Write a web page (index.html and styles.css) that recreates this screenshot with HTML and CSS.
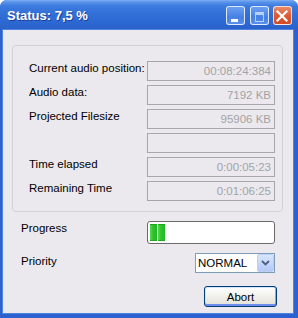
FILE: index.html
```html
<!DOCTYPE html>
<html lang="en">
<head>
  <meta charset="UTF-8" />
  <title>Status</title>
  <link rel="stylesheet" href="styles.css">
</head>
<body>
  <div class="window">
    <div class="titlebar">
      <span class="title">Status: 7,5 %</span>
      <div class="title-btns">
        <span class="tb tb-min"><i></i></span>
        <span class="tb tb-max"><i></i></span>
        <span class="tb tb-close">
          <svg width="19" height="19" viewBox="0 0 19 19"><path d="M4.5 5.5L13.5 14.5M13.5 5.5L4.5 14.5" stroke="#fff" stroke-width="2.2" stroke-linecap="square"/></svg>
        </span>
      </div>
    </div>
    <div class="client">
      <div class="group">
        <label>Current audio position:</label>
        <div class="field">00:08:24:384</div>
        <label>Audio data:</label>
        <div class="field">7192 KB</div>
        <label>Projected Filesize</label>
        <div class="field">95906 KB</div>
        <label></label>
        <div class="field"></div>
        <label>Time elapsed</label>
        <div class="field">0:00:05:23</div>
        <label>Remaining Time</label>
        <div class="field">0:01:06:25</div>
      </div>
      <div class="controls">
        <label class="lbl-progress">Progress</label>
        <div class="progress"><span class="chunk"></span><span class="chunk"></span></div>
        <label class="lbl-prio">Priority</label>
        <div class="select">
          <span class="select-text">NORMAL</span>
          <span class="arrow">
            <svg width="9" height="6" viewBox="0 0 9 6"><path d="M1 1L4.5 4.5L8 1" fill="none" stroke="#4d6185" stroke-width="1.8"/></svg>
          </span>
        </div>
        <button class="abort">Abort</button>
      </div>
    </div>
  </div>
</body>
</html>
```

FILE: styles.css
```css
body {
  margin: 0;
  background: #fff;
  font-family: "Liberation Sans", Arial, sans-serif;
  font-size: 11.5px;
  color: #000;
}

.window {
  width: 298px;
  height: 318px;
  display: flex;
  flex-direction: column;
  background: #2c61cf;
  border-radius: 7px 7px 0 0;
  overflow: hidden;
}

/* title bar */
.titlebar {
  height: 30px;
  flex: none;
  display: flex;
  align-items: center;
  justify-content: space-between;
  padding: 1px 6px 0 7px;
  box-sizing: border-box;
  background: linear-gradient(to bottom, #7eaef2 0, #5a93ea 2px, #3c7ade 6px, #3270d8 14px, #2d68d2 22px, #2a60c8 30px);
}
.title {
  font-weight: bold;
  font-size: 13px;
  color: #fff;
  text-shadow: 1px 1px 0 #1b3f9a;
}
.title-btns {
  display: flex;
  gap: 5px;
  margin-top: -1px;
}
.tb {
  width: 19px;
  height: 19px;
  border: 1px solid rgba(255, 255, 255, 0.8);
  border-radius: 3px;
  box-sizing: border-box;
  position: relative;
  background: linear-gradient(to bottom, #6a9ff0, #4680e3 60%, #5a8fe8);
}
.tb-close {
  margin-left: -1px;
  background: linear-gradient(to bottom, #ea8a6a, #df5a33 50%, #d24a24);
}
.tb-close svg { position: absolute; left: 0; top: 0; margin: -1px; }
.tb-min i {
  position: absolute;
  left: 4px;
  top: 12px;
  width: 7px;
  height: 3px;
  background: #fff;
}
.tb-max i {
  position: absolute;
  left: 4px;
  top: 5px;
  width: 9px;
  height: 10px;
  box-sizing: border-box;
  border: 1px solid rgba(255, 255, 255, 0.6);
  border-top-width: 3px;
}

/* client area */
.client {
  flex: 1;
  margin: 0 5px 5px 3px;
  background: #ebe9ed;
  padding: 15px 10px 0 9px;
  box-shadow: 0 0 0 1px #4d84e2;
}

.group {
  height: 167px;
  box-sizing: border-box;
  border: 1px solid #d3d1d8;
  border-radius: 4px;
  padding: 15px 0 0 16px;
  display: grid;
  grid-template-columns: 118px 128px;
  grid-auto-rows: 20px;
  row-gap: 4px;
}
.group label {
  line-height: 13px;
  padding-top: 1px;
  white-space: nowrap;
}
.field {
  border: 1px solid #a7a6aa;
  height: 20px;
  box-sizing: border-box;
  line-height: 18px;
  text-align: right;
  padding-right: 3px;
  color: #a3a2a6;
}

.controls {
  display: grid;
  grid-template-columns: 126px 128px;
  padding: 9px 0 0 9px;
}
.controls label {
  line-height: 13px;
}
.lbl-progress { padding-top: 1px; }
.lbl-prio { padding-top: 2px; margin-top: 9px; }

.progress {
  height: 23px;
  box-sizing: border-box;
  border: 1px solid #6a6a6a;
  border-radius: 3px;
  background: #fff;
  padding: 2px;
  display: flex;
  gap: 1px;
}
.chunk {
  width: 7px;
  height: 17px;
  background: linear-gradient(to right, #58d858 0, #2ec42e 40%, #22b822 100%);
  box-shadow: inset 0 1px 0 #1fa51f, inset 0 -1px 0 #1fa51f;
}

.select {
  margin-top: 9px;
  justify-self: end;
  width: 80px;
  height: 20px;
  box-sizing: border-box;
  border: 1px solid #7f9db9;
  background: #fff;
  display: flex;
  justify-content: space-between;
}
.select-text {
  line-height: 18px;
  padding-left: 2px;
}
.arrow {
  width: 17px;
  height: 18px;
  box-sizing: border-box;
  border: 1px solid #bcd0f4;
  border-radius: 2px;
  background: linear-gradient(to bottom, #dbe6fd, #c2d4fa 60%, #b4c9f7);
  display: flex;
  align-items: center;
  justify-content: center;
}

.abort {
  grid-column: 2;
  justify-self: end;
  margin: 13px -2px 0 0;
  width: 73px;
  height: 21px;
  border: 1px solid #003c74;
  border-radius: 3px;
  background: linear-gradient(to bottom, #fff 0, #f3f3ef 40%, #e6e5de 85%, #d6d0c5 100%);
  box-shadow: inset 0 -2px 0 #6d8ef0, inset -1px 0 0 #89a8f3, inset 1px 1px 0 #cee7ff;
  font-family: "Liberation Sans", Arial, sans-serif;
  font-size: 11.5px;
  color: #000;
  padding: 0;
}
```
